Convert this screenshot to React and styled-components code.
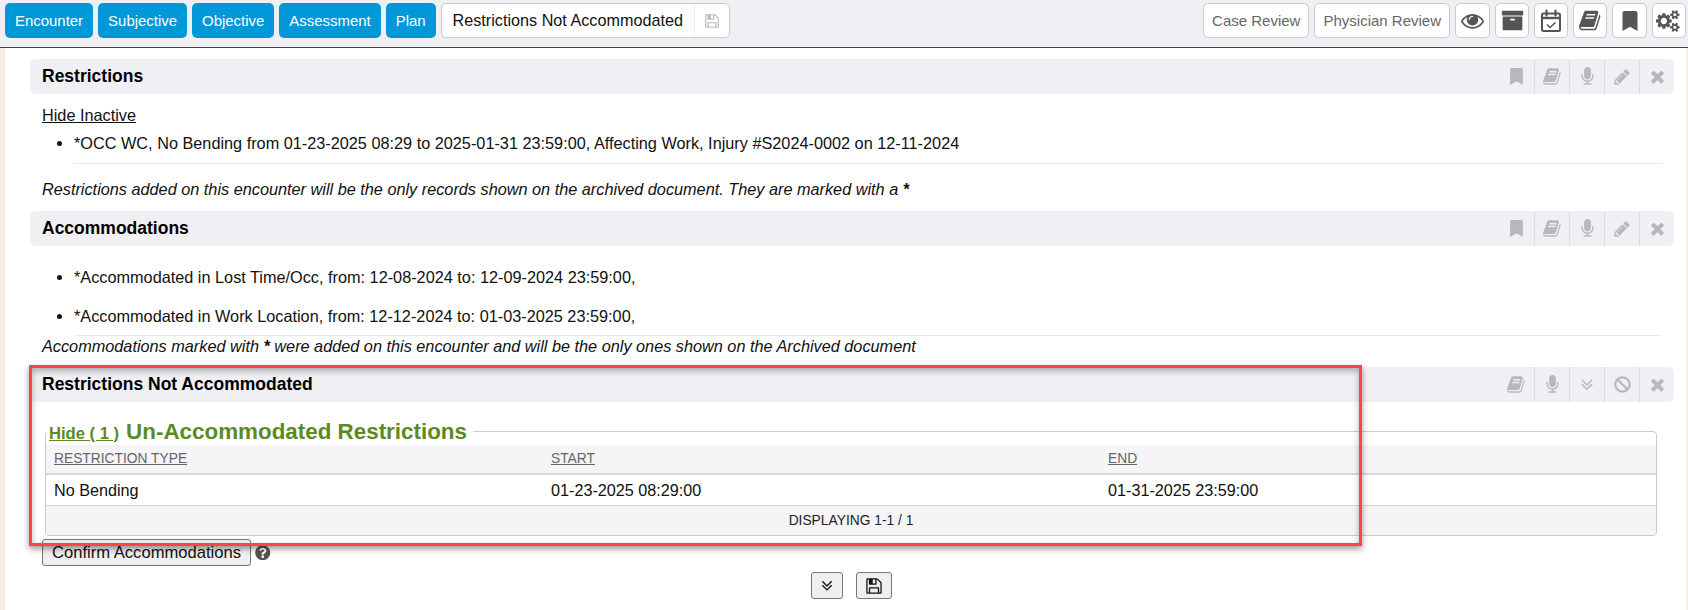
import React from "react";
import styled, { createGlobalStyle } from "styled-components";
import { FaBan, FaBookmark, FaQuestionCircle } from "react-icons/fa";

const GlobalStyle = createGlobalStyle`
  html, body {
    margin: 0;
    padding: 0;
    background: #fff;
    font-family: "Liberation Sans", Arial, sans-serif;
    overflow: hidden;
  }
  * { box-sizing: border-box; }
`;

// Icon drawings, on the 1792 grid the icon font uses
const ICONS = {
  book: "M1639 478q40 57 18 129l-275 906q-19 64-76.5 107.5t-122.5 43.5h-923q-77 0-148.5-53.5t-99.5-131.5q-24-67-2-127 0-4 3-27t4-37q1-8-3-21.5t-3-19.5q2-11 8-21t16.5-23.5 16.5-23.5q23-38 45-91.5t30-91.5q3-10 .5-30t-.5-28q3-11 17-28t17-23q21-36 42-92t25-90q1-9-2.5-32t.5-28q4-13 22-30.5t22-22.5q19-26 42.5-84.5t27.5-96.5q1-8-3-25.5t-2-26.5q2-8 9-18t18-23 17-21q8-12 16.5-30.5t15-35 16-36 19.5-32 26.5-23.5 36-11.5 47.5 5.5l-1 3q38-9 51-9h761q74 0 114 56t18 130l-274 906q-36 119-71.5 153.5t-128.5 34.5h-869q-27 0-38 15-11 16-1 43 24 70 144 70h923q29 0 56-15.5t35-41.5l300-987q7-22 5-57 38 15 59 43zm-1064 2q-4 13 2 22.5t20 9.5h608q13 0 25.5-9.5t16.5-22.5l21-64q4-13-2-22.5t-20-9.5h-608q-13 0-25.5 9.5t-16.5 22.5zm-83 256q-4 13 2 22.5t20 9.5h608q13 0 25.5-9.5t16.5-22.5l21-64q4-13-2-22.5t-20-9.5h-608q-13 0-25.5 9.5t-16.5 22.5z",
  pencil: "M491 1536l91-91-235-235-91 91v107h128v128h107zm523-928q0-22-22-22-10 0-17 7l-542 542q-7 7-7 17 0 22 22 22 10 0 17-7l542-542q7-7 7-17zm-54-192l416 416-832 832h-416v-416zm683 96q0 53-37 90l-166 166-416-416 166-165q36-38 90-38 53 0 91 38l235 234q37 39 37 91z",
  times: "M1490 1322q0 40-28 68l-136 136q-28 28-68 28t-68-28l-294-294-294 294q-28 28-68 28t-68-28l-136-136q-28-28-28-68t28-68l294-294-294-294q-28-28-28-68t28-68l136-136q28-28 68-28t68 28l294 294 294-294q28-28 68-28t68 28l136 136q28 28 28 68t-28 68l-294 294 294 294q28 28 28 68z",
  mic: "M1472 704v128q0 221-147.5 384.5t-364.5 187.5v132h256q26 0 45 19t19 45-19 45-45 19h-640q-26 0-45-19t-19-45 19-45 45-19h256v-132q-217-24-364.5-187.5t-147.5-384.5v-128q0-26 19-45t45-19 45 19 19 45v128q0 185 131.5 316.5t316.5 131.5 316.5-131.5 131.5-316.5v-128q0-26 19-45t45-19 45 19 19 45zm-256-384v512q0 132-94 226t-226 94-226-94-94-226v-512q0-132 94-226t226-94 226 94 94 226z",
  chevrons: "M1395 864q0 13-10 23l-466 466q-10 10-23 10t-23-10l-466-466q-10-10-10-23t10-23l50-50q10-10 23-10t23 10l393 393 393-393q10-10 23-10t23 10l50 50q10 10 10 23zm0-384q0 13-10 23l-466 466q-10 10-23 10t-23-10l-466-466q-10-10-10-23t10-23l50-50q10-10 23-10t23 10l393 393 393-393q10-10 23-10t23 10l50 50q10 10 10 23z",
  eye: "M1664 960q-152-236-381-353 61 104 61 225 0 185-131.5 316.5t-316.5 131.5-316.5-131.5-131.5-316.5q0-121 61-225-229 117-381 353 133 205 333.5 326.5t434.5 121.5 434.5-121.5 333.5-326.5zm-720-384q0-20-14-34t-34-14q-125 0-214.5 89.5t-89.5 214.5q0 20 14 34t34 14 34-14 14-34q0-86 61-147t147-61q20 0 34-14t14-34zm848 384q0 34-20 69-140 230-376.5 368.5t-499.5 138.5-499.5-139-376.5-368q-20-35-20-69t20-69q140-229 376.5-368t499.5-139 499.5 139 376.5 368q20 35 20 69z",
  archive: "M1088 832q0-26-19-45t-45-19h-256q-26 0-45 19t-19 45 19 45 45 19h256q26 0 45-19t19-45zm576-192v960q0 26-19 45t-45 19h-1408q-26 0-45-19t-19-45v-960q0-26 19-45t45-19h1408q26 0 45 19t19 45zm64-448v256q0 26-19 45t-45 19h-1536q-26 0-45-19t-19-45v-256q0-26 19-45t45-19h1536q26 0 45 19t19 45z",
  save: "M512 1536h768v-384h-768v384zm896 0h128v-896q0-14-10-38.5t-20-34.5l-281-281q-10-10-34-20t-39-10v416q0 40-28 68t-68 28h-576q-40 0-68-28t-28-68v-416h-128v1280h128v-416q0-40 28-68t68-28h832q40 0 68 28t28 68v416zm-384-928v-320q0-13-9.5-22.5t-22.5-9.5h-192q-13 0-22.5 9.5t-9.5 22.5v320q0 13 9.5 22.5t22.5 9.5h192q13 0 22.5-9.5t9.5-22.5zm640 32v928q0 40-28 68t-68 28h-1344q-40 0-68-28t-28-68v-1344q0-40 28-68t68-28h928q40 0 88 20t76 48l280 280q28 28 48 76t20 88z",
  cogs: "M896 896q0-106-75-181t-181-75-181 75-75 181 75 181 181 75 181-75 75-181zm768 512q0-52-38-90t-90-38-90 38-38 90q0 53 37.5 90.5t90.5 37.5 90.5-37.5 37.5-90.5zm0-1024q0-52-38-90t-90-38-90 38-38 90q0 53 37.5 90.5t90.5 37.5 90.5-37.5 37.5-90.5zm-384 421v185q0 10-7 19.5t-16 10.5l-155 24q-11 35-32 76 34 48 90 115 7 11 7 20 0 12-7 19-23 30-82.5 89.5t-78.5 59.5q-11 0-21-7l-115-90q-37 19-77 31-11 108-23 155-7 24-30 24h-186q-11 0-20-7.5t-10-17.5l-23-153q-34-10-75-31l-118 89q-7 7-20 7-11 0-21-8-144-133-144-160 0-9 7-19 10-14 41-53t47-61q-23-44-35-82l-152-24q-10-1-17-9.5t-7-19.5v-185q0-10 7-19.5t16-10.5l155-24q11-35 32-76-34-48-90-115-7-11-7-20 0-12 7-20 22-30 82-89t79-59q11 0 21 7l115 90q34-18 77-32 11-108 23-154 7-24 30-24h186q11 0 20 7.5t10 17.5l23 153q34 10 75 31l118-89q8-7 20-7 11 0 21 8 144 133 144 160 0 8-7 19-12 16-42 54t-45 60q23 48 34 82l152 23q10 2 17 10.5t7 19.5zm640 533v140q0 16-149 31-12 27-30 52 51 113 51 138 0 4-4 7-122 71-124 71-8 0-46-47t-52-68q-20 2-30 2t-30-2q-14 21-52 68t-46 47q-2 0-124-71-4-3-4-7 0-25 51-138-18-25-30-52-149-15-149-31v-140q0-16 149-31 13-29 30-52-51-113-51-138 0-4 4-7 4-2 35-20t59-34 30-16q8 0 46 46.5t52 67.5q20-2 30-2t30 2q51-71 92-112l6-2q4 0 124 70 4 3 4 7 0 25-51 138 17 23 30 52 149 15 149 31zm0-1024v140q0 16-149 31-12 27-30 52 51 113 51 138 0 4-4 7-122 71-124 71-8 0-46-47t-52-68q-20 2-30 2t-30-2q-14 21-52 68t-46 47q-2 0-124-71-4-3-4-7 0-25 51-138-18-25-30-52-149-15-149-31v-140q0-16 149-31 13-29 30-52-51-113-51-138 0-4 4-7 4-2 35-20t59-34 30-16q8 0 46 46.5t52 67.5q20-2 30-2t30 2q51-71 92-112l6-2q4 0 124 70 4 3 4 7 0 25-51 138 17 23 30 52 149 15 149 31z",
};

const Glyph = ({ name, size, wide }) => (
  <svg
    width={wide ? (size * 2048) / 1792 : size}
    height={size}
    viewBox={wide ? "0 0 2048 1792" : "0 0 1792 1792"}
    fill="currentColor"
  >
    <path d={ICONS[name]} />
  </svg>
);

const CalendarIcon = () => (
  <svg width="22" height="24" viewBox="0 0 22 24" fill="none" stroke="currentColor">
    <rect x="2" y="4.5" width="18" height="17.5" rx="1.5" strokeWidth="2" />
    <path d="M2 9h18" strokeWidth="2.4" />
    <path d="M6.5 1.5v5M15.5 1.5v5" strokeWidth="2.2" strokeLinecap="round" />
    <path d="M7 15.5l3 3 5.5-5" strokeWidth="1.6" />
  </svg>
);

const Page = styled.div`
  position: relative;
  width: 1688px;
  height: 610px;
  overflow: hidden;
`;

// Top toolbar
const Toolbar = styled.div`
  display: flex;
  justify-content: space-between;
  height: 48px;
  padding: 3px 2px 0 5px;
  background: #efeff4;
  border-bottom: 1px solid #444;
`;

const ToolGroup = styled.div`
  display: flex;
  gap: 5px;
`;

const NavButton = styled.div`
  display: flex;
  align-items: center;
  height: 35px;
  padding: 0 10px;
  background: #0098d8;
  border-radius: 5px;
  color: #fff;
  font-size: 14.95px;
`;

const TitleBox = styled.div`
  display: flex;
  align-items: center;
  height: 35px;
  background: #fff;
  border: 1px solid #ccc;
  border-radius: 5px;
  font-size: 16.2px;
  color: #111;
`;

const TitleText = styled.span`
  padding: 0 11px;
`;

const TitleSave = styled.span`
  display: flex;
  align-items: center;
  justify-content: center;
  width: 35px;
  height: 100%;
  border-left: 1px solid #eee;
  color: #b9b9b9;
`;

const ReviewButton = styled.div`
  display: flex;
  align-items: center;
  height: 35px;
  padding: 0 8px;
  background: #fff;
  border: 1px solid #ccc;
  border-radius: 5px;
  color: #666;
  font-size: 15px;
`;

const ToolIcon = styled.div`
  display: flex;
  align-items: center;
  justify-content: center;
  width: ${(p) => p.$w || 34}px;
  height: 35px;
  background: #fff;
  border: 1px solid #ccc;
  border-radius: 5px;
  color: #555;
  font-size: 20px;
`;

// Main area with the beige side edges
const Content = styled.div`
  height: 562px;
  padding: 11px 12px 0 25px;
  border-left: 5px solid #f5eee0;
  border-right: 2px solid #f5eee0;
`;

const PanelHeader = styled.div`
  display: flex;
  align-items: center;
  justify-content: space-between;
  height: 35px;
  padding-left: 12px;
  background: #efeff4;
  border-radius: 5px;
`;

const PanelTitle = styled.h2`
  margin: 0;
  font-size: 17.5px;
  font-weight: bold;
  color: #000;
`;

const HeaderActions = styled.div`
  display: flex;
  height: 100%;
`;

const HeaderAction = styled.span`
  display: flex;
  align-items: center;
  justify-content: center;
  width: 35px;
  height: 100%;
  border-left: ${(p) => (p.$first ? "none" : "1px solid #dcdce0")};
  color: #b8b8bc;
  font-size: 17px;
`;

const PanelBody = styled.div`
  padding: ${(p) => p.$top || 0}px 0 0 12px;
  margin-bottom: ${(p) => p.$bottom || 0}px;
  font-size: 16.28px;
  line-height: 20px;
  color: #111;
`;

const HideLink = styled.a`
  display: block;
  margin-bottom: 8px;
  color: #111;
  text-decoration: underline;
`;

const Items = styled.ul`
  margin: 0;
  padding: 0 0 0 32px;
`;

const Item = styled.li`
  margin-bottom: ${(p) => p.$gap || 0}px;
`;

const Rule = styled.hr`
  height: 1px;
  margin: ${(p) => p.$before}px 13px ${(p) => p.$after}px 33px;
  background: #e9e9e9;
  border: none;
`;

const Note = styled.div`
  font-style: italic;
`;

// Un-accommodated table
const Box = styled.fieldset`
  margin: 16px 17px 0 3px;
  padding: 0;
  min-width: 0;
  background: #fff;
  border: 1px solid #ccc;
  border-radius: 4px;
`;

const BoxLegend = styled.legend`
  display: flex;
  align-items: baseline;
  height: 27px;
  margin-left: 1px;
  padding: 0 6px 0 2px;
  color: #5b8a1e;
  font-weight: bold;
`;

const LegendLink = styled.a`
  margin-right: 7px;
  font-size: 16.6px;
  line-height: 25px;
  text-decoration: underline;
`;

const LegendTitle = styled.span`
  font-size: 22.4px;
  line-height: 27px;
`;

const Row = styled.div`
  display: grid;
  grid-template-columns: 497px 557px 1fr;
  align-items: center;
  height: ${(p) => p.$height}px;
  padding-left: 8px;
  background: ${(p) => (p.$shade ? "#f5f5f7" : "#fff")};
  border-bottom: ${(p) => p.$line || 0}px solid #d5d5d8;
`;

const HeadCell = styled.span`
  color: #666;
  font-size: 13.8px;
  text-decoration: underline;
`;

const Cell = styled.span`
  color: #111;
  font-size: 16.2px;
`;

const Paging = styled.div`
  display: flex;
  align-items: center;
  justify-content: center;
  height: 29px;
  padding-top: 1px;
  background: #f5f5f7;
  border-radius: 0 0 4px 4px;
  color: #222;
  font-size: 13.8px;
`;

const ConfirmRow = styled.div`
  display: flex;
  align-items: center;
  gap: 4px;
  margin-top: 3px;
`;

const PlainButton = styled.button`
  display: flex;
  align-items: center;
  justify-content: center;
  width: ${(p) => p.$w}px;
  height: ${(p) => p.$h}px;
  padding: 0;
  background: #efefef;
  border: 1px solid #767676;
  border-radius: 3px;
  color: #111;
  font-family: inherit;
  font-size: 16.6px;
`;

const HelpIcon = styled.span`
  display: flex;
  color: #555;
  font-size: 15.5px;
`;

const BottomBar = styled.div`
  display: flex;
  justify-content: center;
  gap: 13px;
  margin-top: 6px;
  padding-right: 2px;
`;

// Red annotation box drawn over the screenshot
const Callout = styled.div`
  position: absolute;
  left: 29px;
  top: 365px;
  width: 1333px;
  height: 181px;
  border: 3px solid #ff4444;
  box-shadow: 0 3px 6px rgba(0, 0, 0, 0.4), inset 0 3px 6px rgba(0, 0, 0, 0.3);
  pointer-events: none;
`;

const Actions = ({ items }) => (
  <HeaderActions>
    {items.map((item, i) => (
      <HeaderAction key={i} $first={i === 0}>
        {item}
      </HeaderAction>
    ))}
  </HeaderActions>
);

const editActions = [
  <FaBookmark />,
  <Glyph name="book" size={19} />,
  <Glyph name="mic" size={19} />,
  <Glyph name="pencil" size={18} />,
  <Glyph name="times" size={19} />,
];

const lockedActions = [
  <Glyph name="book" size={19} />,
  <Glyph name="mic" size={19} />,
  <Glyph name="chevrons" size={20} />,
  <FaBan />,
  <Glyph name="times" size={19} />,
];

const App = () => {
  return (
    <Page>
      <GlobalStyle />
      <Toolbar>
        <ToolGroup>
          <NavButton>Encounter</NavButton>
          <NavButton>Subjective</NavButton>
          <NavButton>Objective</NavButton>
          <NavButton>Assessment</NavButton>
          <NavButton>Plan</NavButton>
          <TitleBox>
            <TitleText>Restrictions Not Accommodated</TitleText>
            <TitleSave>
              <Glyph name="save" size={16} />
            </TitleSave>
          </TitleBox>
        </ToolGroup>
        <ToolGroup>
          <ReviewButton>Case Review</ReviewButton>
          <ReviewButton>Physician Review</ReviewButton>
          <ToolIcon $w={35}>
            <Glyph name="eye" size={23} />
          </ToolIcon>
          <ToolIcon>
            <Glyph name="archive" size={23} />
          </ToolIcon>
          <ToolIcon>
            <CalendarIcon />
          </ToolIcon>
          <ToolIcon>
            <Glyph name="book" size={23} />
          </ToolIcon>
          <ToolIcon $w={35}>
            <FaBookmark />
          </ToolIcon>
          <ToolIcon>
            <Glyph name="cogs" size={22} wide />
          </ToolIcon>
        </ToolGroup>
      </Toolbar>

      <Content>
        <PanelHeader>
          <PanelTitle>Restrictions</PanelTitle>
          <Actions items={editActions} />
        </PanelHeader>
        <PanelBody $top={11} $bottom={12}>
          <HideLink>Hide Inactive</HideLink>
          <Items>
            <Item>*OCC WC, No Bending from 01-23-2025 08:29 to 2025-01-31 23:59:00, Affecting Work, Injury #S2024-0002 on 12-11-2024</Item>
          </Items>
          <Rule $before={10} $after={15} />
          <Note>
            Restrictions added on this encounter will be the only records shown on the archived document. They are marked with a <b>*</b>
          </Note>
        </PanelBody>

        <PanelHeader>
          <PanelTitle>Accommodations</PanelTitle>
          <Actions items={editActions} />
        </PanelHeader>
        <PanelBody $top={21} $bottom={11}>
          <Items>
            <Item $gap={19}>*Accommodated in Lost Time/Occ, from: 12-08-2024 to: 12-09-2024 23:59:00,</Item>
            <Item>*Accommodated in Work Location, from: 12-12-2024 to: 01-03-2025 23:59:00,</Item>
          </Items>
          <Rule $before={9} $after={0} />
          <Note>
            Accommodations marked with <b>*</b> were added on this encounter and will be the only ones shown on the Archived document
          </Note>
        </PanelBody>

        <PanelHeader>
          <PanelTitle>Restrictions Not Accommodated</PanelTitle>
          <Actions items={lockedActions} />
        </PanelHeader>
        <PanelBody>
          <Box>
            <BoxLegend>
              <LegendLink>Hide ( 1 )</LegendLink>
              <LegendTitle>Un-Accommodated Restrictions</LegendTitle>
            </BoxLegend>
            <Row $height={30} $shade $line={2}>
              <HeadCell>RESTRICTION TYPE</HeadCell>
              <HeadCell>START</HeadCell>
              <HeadCell>END</HeadCell>
            </Row>
            <Row $height={31} $line={1}>
              <Cell>No Bending</Cell>
              <Cell>01-23-2025 08:29:00</Cell>
              <Cell>01-31-2025 23:59:00</Cell>
            </Row>
            <Paging>DISPLAYING 1-1 / 1</Paging>
          </Box>
          <ConfirmRow>
            <PlainButton $w={209} $h={27}>Confirm Accommodations</PlainButton>
            <HelpIcon>
              <FaQuestionCircle />
            </HelpIcon>
          </ConfirmRow>
        </PanelBody>
        <BottomBar>
          <PlainButton $w={32} $h={27}>
            <Glyph name="chevrons" size={18} />
          </PlainButton>
          <PlainButton $w={36} $h={27}>
            <Glyph name="save" size={18} />
          </PlainButton>
        </BottomBar>
      </Content>

      <Callout />
    </Page>
  );
};

export default App;
